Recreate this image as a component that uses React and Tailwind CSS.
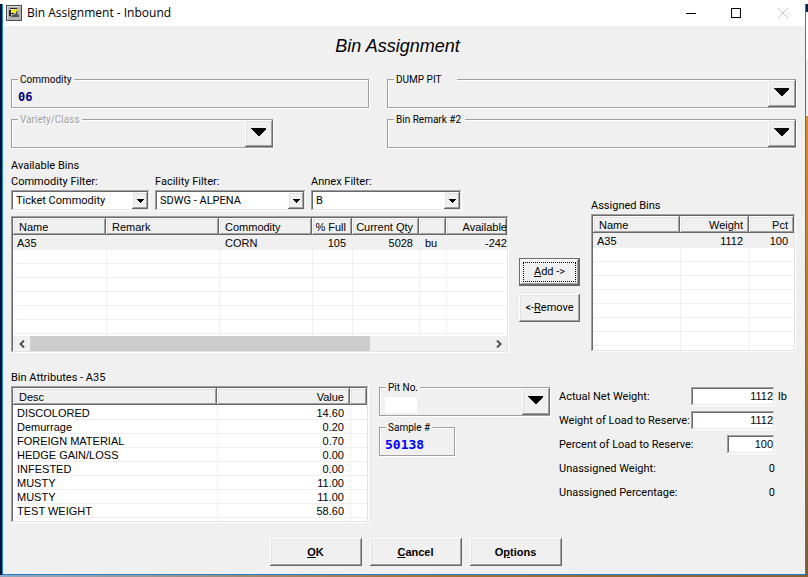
import React from "react";

const raised =
  "bg-[#f0f0f0] shadow-[inset_-1px_-1px_0_#696969,inset_1px_1px_0_#ffffff,inset_-2px_-2px_0_#a0a0a0,inset_2px_2px_0_#e3e3e3]";
const sunken =
  "bg-white shadow-[inset_-1px_-1px_0_#ffffff,inset_1px_1px_0_#a0a0a0,inset_-2px_-2px_0_#e3e3e3,inset_2px_2px_0_#696969]";
const etched =
  "border border-[#a0a0a0] shadow-[1px_1px_0_#ffffff,inset_1px_1px_0_#ffffff]";

function AppIcon() {
  return (
    <svg width="16" height="16" viewBox="0 0 16 16" shapeRendering="crispEdges" aria-hidden="true">
      <rect width="16" height="16" fill="#4a4a4a" />
      <rect x="1" y="1" width="14" height="14" fill="#d8d8d8" />
      <rect x="2" y="2" width="13" height="13" fill="#b4b4b4" />
      <rect x="4" y="3" width="7" height="1" fill="#2a2a2a" />
      <rect x="5" y="4" width="6" height="4" fill="#f2e61c" />
      <rect x="3" y="5" width="2" height="6" fill="#2a2a2a" />
      <rect x="5" y="8" width="3" height="1" fill="#2a2a2a" />
      <rect x="5" y="4" width="2" height="1" fill="#ffffff" />
      <path d="M5 12h8v-2h-1V8h-1V6h-1v3H8v1H6v1H5z" fill="#555555" />
    </svg>
  );
}

function BigArrow() {
  return (
    <svg width="15" height="8" viewBox="0 0 15 8" shapeRendering="crispEdges" aria-hidden="true">
      <path d="M0 0h15v1L8 8H7L0 1z" fill="#000" />
    </svg>
  );
}

function SmallArrow() {
  return (
    <svg width="7" height="4" viewBox="0 0 7 4" shapeRendering="crispEdges" aria-hidden="true">
      <path d="M0 0h7v1H6v1H5v1H4v1H3V3H2V2H1V1H0z" fill="#000" />
    </svg>
  );
}

function GroupLabel({ htmlFor, className = "", children }) {
  return (
    <label
      htmlFor={htmlFor}
      className={`absolute -top-2 left-1.5 z-10 bg-[#f0f0f0] px-0.5 text-[10px] leading-4 whitespace-nowrap ${className}`}
    >
      {children}
    </label>
  );
}

function DropGroup({ id, label, labelClass, className = "", disabled, children }) {
  return (
    <div className={`relative h-[29px] ${etched} ${className}`}>
      <GroupLabel htmlFor={id} className={labelClass}>
        {label}
      </GroupLabel>
      <select id={id} disabled={disabled} className="block h-full w-full appearance-none bg-transparent pl-1.5 outline-none">
        <option value=""></option>
      </select>
      {children}
      <span className={`pointer-events-none absolute inset-y-0 -right-px flex w-7 items-start justify-center pt-2 pr-0.5 ${raised}`}>
        <BigArrow />
      </span>
    </div>
  );
}

function Combo({ id, label, value, className }) {
  return (
    <div className={className}>
      <label htmlFor={id} className="block leading-4 whitespace-nowrap">
        {label}
      </label>
      <div className={`relative h-[21px] p-0.5 ${sunken}`}>
        <select
          id={id}
          defaultValue={value}
          className="block h-full w-full appearance-none bg-transparent pt-px pl-[3px] leading-4 outline-none"
        >
          <option>{value}</option>
        </select>
        <span className={`pointer-events-none absolute inset-y-0.5 right-0.5 flex w-4 items-center justify-center ${raised}`}>
          <SmallArrow />
        </span>
      </div>
    </div>
  );
}

function ListView({ columns, rows, blanks, label, className, highlight, children }) {
  return (
    <div className={`flex flex-col overflow-hidden p-0.5 ${sunken} ${className}`}>
      <div className="min-h-0 flex-1 overflow-hidden">
        <table
          aria-label={label}
          className="w-full table-fixed border-separate border-spacing-0 font-['Liberation_Sans',Arial,sans-serif]"
        >
          <colgroup>
            {columns.map((c, i) => (
              <col key={i} className={c.width} />
            ))}
          </colgroup>
          <thead>
            <tr>
              {columns.map((c, i) => (
                <th key={i} className={`p-0 pb-px font-normal ${highlight ? "bg-[#f0f0f0]" : ""}`}>
                  <div className={`h-[17px] overflow-hidden pt-px leading-4 whitespace-nowrap ${c.head} ${raised}`}>{c.title}</div>
                </th>
              ))}
            </tr>
          </thead>
          <tbody>
            {rows.map((r, i) => (
              <tr key={i} className={highlight ? "bg-[#f0f0f0]" : ""}>
                {columns.map((c, j) => (
                  <td
                    key={j}
                    className={`h-3.5 border-b border-l border-[#f0f0f0] pt-px pb-0 leading-3 whitespace-nowrap first:border-l-0 ${c.cell}`}
                  >
                    {r[j]}
                  </td>
                ))}
              </tr>
            ))}
            {Array.from({ length: blanks }, (_, i) => (
              <tr key={`blank-${i}`}>
                {columns.map((c, j) => (
                  <td key={j} className="h-3.5 border-b border-l border-[#f0f0f0] p-0 first:border-l-0" />
                ))}
              </tr>
            ))}
          </tbody>
        </table>
      </div>
      {children}
    </div>
  );
}

const left = { head: "pl-1.5 text-left", cell: "pl-1 text-left" };
const indent = { head: "pl-1.5 text-left", cell: "pl-[5px] text-left" };
const right = { head: "pr-1.5 text-right", cell: "pr-1.5 text-right" };
const clipped = { head: "text-right", cell: "pl-0 pr-0 text-right" };

const availableColumns = [
  { title: "Name", width: "w-[93px]", ...left },
  { title: "Remark", width: "w-[113px]", ...indent },
  { title: "Commodity", width: "w-[93px]", ...indent },
  { title: "% Full", width: "w-[40px]", ...right },
  { title: "Current Qty", width: "w-[67px]", ...right },
  { title: "\u00a0", width: "w-[27px]", ...indent },
  { title: "Available", width: "", ...clipped },
];

const assignedColumns = [
  { title: "Name", width: "", ...left },
  { title: "Weight", width: "w-[69px]", ...right },
  { title: "Pct", width: "w-[45px]", ...right },
];

const attributeColumns = [
  { title: "Desc", width: "", ...left },
  { title: "Value", width: "w-[133px]", ...right },
  { title: "\u00a0", width: "w-[17px]", ...left },
];

const attributes = [
  ["DISCOLORED", "14.60"],
  ["Demurrage", "0.20"],
  ["FOREIGN MATERIAL", "0.70"],
  ["HEDGE GAIN/LOSS", "0.00"],
  ["INFESTED", "0.00"],
  ["MUSTY", "11.00"],
  ["MUSTY", "11.00"],
  ["TEST WEIGHT", "58.60"],
];

function ScrollBar() {
  return (
    <div className="flex h-[15px] shrink-0 bg-[#f0f0f0]">
      <button type="button" aria-label="Scroll left" className="flex w-[17px] items-center justify-center">
        <svg width="6" height="8" viewBox="0 0 6 8" aria-hidden="true">
          <path d="M5 0.5L1.5 4L5 7.5" fill="none" stroke="#505050" strokeWidth="2" />
        </svg>
      </button>
      <div className="flex-1">
        <div className="h-full w-[74%] bg-[#cdcdcd]" />
      </div>
      <button type="button" aria-label="Scroll right" className="flex w-[17px] items-center justify-center">
        <svg width="6" height="8" viewBox="0 0 6 8" aria-hidden="true">
          <path d="M1 0.5L4.5 4L1 7.5" fill="none" stroke="#505050" strokeWidth="2" />
        </svg>
      </button>
    </div>
  );
}

function NumberRow({ id, label, value, width, unit }) {
  return (
    <div className="flex h-6 items-center">
      <label htmlFor={id} className="min-w-0 flex-1 pt-0.5 whitespace-nowrap">
        {label}
      </label>
      <input
        id={id}
        defaultValue={value}
        className={`h-[19px] shrink-0 pr-0.5 text-right font-['Liberation_Sans',Arial,sans-serif] outline-none ${sunken} ${width}`}
      />
      <span className="w-[21px] shrink-0 pt-0.5 pl-[3px]">{unit}</span>
    </div>
  );
}

function ReadRow({ label, value }) {
  return (
    <div className="flex h-6 items-center pt-0.5">
      <span className="flex-1">{label}</span>
      <span>{value}</span>
      <span className="w-[21px]" />
    </div>
  );
}

function DialogButton({ children }) {
  return (
    <button
      type="button"
      className={`h-7 w-[92px] font-['Liberation_Sans',Arial,sans-serif] font-bold ${raised}`}
    >
      {children}
    </button>
  );
}

export default function App() {
  return (
    <div className="flex min-h-screen flex-col bg-white font-['Roboto','Liberation_Sans',sans-serif] text-[11px] leading-4 text-black">
      <div className="h-1 shrink-0 bg-white" />
      <div className="flex flex-1">
        <div className="w-0.5 shrink-0 bg-[#001433]" />

        <main className="flex min-w-0 flex-1 flex-col border-x border-b border-[#1e82d2] bg-[#f0f0f0]">
          <header className="flex h-[22px] items-start bg-white pl-[3px]">
            <div className="flex flex-1 items-center gap-[5px] pt-px">
              <AppIcon />
              <span className="font-['Open_Sans','Noto_Sans',sans-serif] text-[12px] leading-4">Bin Assignment - Inbound</span>
            </div>
            <button type="button" aria-label="Minimize" className="flex h-[18px] w-[41px] items-center justify-center">
              <svg width="11" height="11" viewBox="0 0 11 11" shapeRendering="crispEdges" aria-hidden="true">
                <rect x="0" y="5" width="10" height="1" fill="#000" />
              </svg>
            </button>
            <button type="button" aria-label="Maximize" className="flex h-[18px] w-12 items-center justify-center">
              <svg width="10" height="10" viewBox="0 0 10 10" shapeRendering="crispEdges" aria-hidden="true">
                <path d="M0 0h10v10H0zM1 1v8h8V1z" fill="#000" fillRule="evenodd" />
              </svg>
            </button>
            <button type="button" aria-label="Close" disabled className="flex h-[18px] w-[45px] items-center justify-center">
              <svg width="10" height="10" viewBox="0 0 10 10" aria-hidden="true">
                <path d="M0 0L10 10M10 0L0 10" stroke="#c4c4c4" strokeWidth="1" />
              </svg>
            </button>
          </header>

          <div className="flex flex-1 flex-col pr-[9px] pl-2">
            <h1 className="mb-[13px] pr-3 text-center font-['Liberation_Sans',Arial,sans-serif] text-[18px] leading-10 italic">
              Bin Assignment
            </h1>

            <section className="grid grid-cols-[358fr_409fr] gap-x-[18px] gap-y-[11px]">
              <div className={`relative h-[29px] ${etched}`}>
                <GroupLabel htmlFor="commodity">Commodity</GroupLabel>
                <output
                  id="commodity"
                  className="block pt-[9px] pl-1.5 font-['DejaVu_Sans_Mono',monospace] text-[12px] leading-4 font-bold text-[#000080]"
                >
                  06
                </output>
              </div>
              <DropGroup id="dump-pit" label="DUMP PIT" labelClass="pr-4" />
              <DropGroup
                id="variety"
                label="Variety/Class"
                disabled
                className="w-[262px]"
                labelClass="text-[#a0a0a0] [text-shadow:1px_1px_0_#ffffff]"
              />
              <DropGroup id="remark-2" label="Bin Remark #2" labelClass="pr-1" />
            </section>

            <section className="mt-2.5 flex items-end">
              <div className="min-w-0 flex-1">
                <h2>Available Bins</h2>
                <div className="mb-[5px] flex gap-[5px]">
                  <Combo id="commodity-filter" label="Commodity Filter:" value="Ticket Commodity" className="w-[139px]" />
                  <Combo id="facility-filter" label="Facility Filter:" value="SDWG - ALPENA" className="w-[151px]" />
                  <Combo id="annex-filter" label="Annex Filter:" value="B" className="w-[151px]" />
                </div>
                <ListView
                  label="Available Bins"
                  columns={availableColumns}
                  rows={[["A35", "", "CORN", "105", "5028", "bu", "-242"]]}
                  blanks={7}
                  highlight
                  className="h-[137px]"
                >
                  <ScrollBar />
                </ListView>
              </div>

              <div className="mb-[31px] ml-2.5 flex w-[61px] flex-col gap-2">
                <button
                  type="button"
                  className="h-7 border border-[#696969] bg-[#f0f0f0] p-[3px] shadow-[inset_-1px_-1px_0_#696969,inset_1px_1px_0_#ffffff,inset_-2px_-2px_0_#a0a0a0]"
                >
                  <span className="flex h-full items-center justify-center border border-dotted border-black">
                    <span>
                      <u>A</u>dd -&gt;
                    </span>
                  </span>
                </button>
                <button type="button" className={`h-7 whitespace-nowrap ${raised}`}>
                  &lt;-<u>R</u>emove
                </button>
              </div>

              <div className="mb-px ml-[11px] w-[205px]">
                <h2>Assigned Bins</h2>
                <ListView
                  label="Assigned Bins"
                  columns={assignedColumns}
                  rows={[["A35", "1112", "100"]]}
                  blanks={8}
                  highlight
                  className="h-[138px]"
                />
              </div>
            </section>

            <section className="mt-[17px] flex items-start">
              <div className="min-w-0 flex-1">
                <h2>Bin Attributes - A35</h2>
                <ListView
                  label="Bin Attributes"
                  columns={attributeColumns}
                  rows={attributes}
                  blanks={1}
                  className="h-[137px]"
                />
              </div>

              <div className="mt-[17px] ml-2.5 flex w-[171px] flex-col gap-[11px]">
                <DropGroup id="pit-no" label="Pit No.">
                  <span className="pointer-events-none absolute top-[9px] left-[5px] h-4 w-8 bg-white" />
                </DropGroup>
                <div className={`relative h-[29px] w-[76px] ${etched}`}>
                  <GroupLabel htmlFor="sample">Sample #</GroupLabel>
                  <output
                    id="sample"
                    className="block pt-[9px] pl-[5px] font-['DejaVu_Sans_Mono',monospace] text-[13px] leading-4 font-bold text-[#0000ff]"
                  >
                    50138
                  </output>
                </div>
              </div>

              <div className="mt-3.5 ml-[9px] w-[237px]">
                <NumberRow id="net" label="Actual Net Weight:" value="1112" width="w-[84px]" unit="lb" />
                <NumberRow id="reserve" label="Weight of Load to Reserve:" value="1112" width="w-[84px]" />
                <NumberRow id="percent" label="Percent of Load to Reserve:" value="100" width="w-[48px]" />
                <ReadRow label="Unassigned Weight:" value="0" />
                <ReadRow label="Unassigned Percentage:" value="0" />
              </div>
            </section>

            <footer className="mt-[15px] mb-2 flex justify-center gap-2 pl-6">
              <DialogButton>
                <u>O</u>K
              </DialogButton>
              <DialogButton>
                <u>C</u>ancel
              </DialogButton>
              <DialogButton>
                O<u>p</u>tions
              </DialogButton>
            </footer>
          </div>
        </main>

        <div className="flex w-0.5 shrink-0 flex-col">
          <div className="h-2 bg-[#002450]" />
          <div className="h-12 bg-white" />
          <div className="h-14 bg-[#f0f0f0]" />
          <div className="flex-1 bg-linear-to-b from-[#d98a2a] via-[#b5762c] to-[#7d5a30]" />
        </div>
      </div>
      <div className="h-0.5 shrink-0 bg-linear-to-r from-[#8fa9c0] via-[#a8733a] to-[#8a6030]" />
    </div>
  );
}
